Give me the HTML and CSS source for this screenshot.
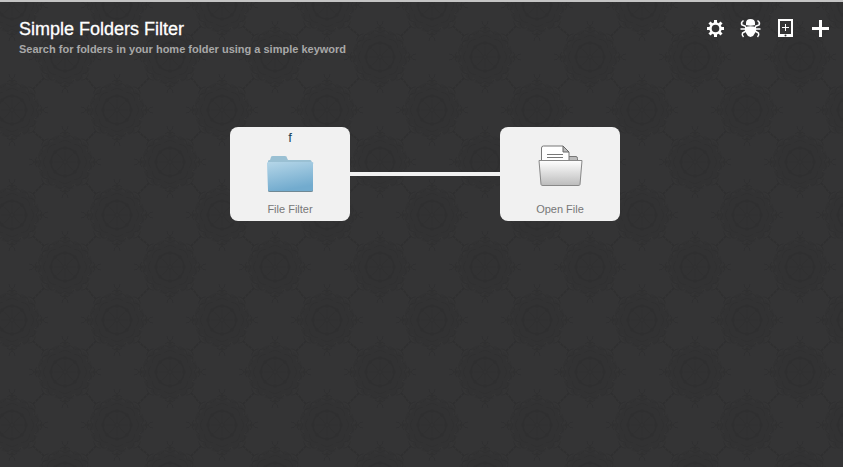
FILE: index.html
```html
<!DOCTYPE html>
<html lang="en">
<head>
<meta charset="utf-8">
<title>Simple Folders Filter</title>
<link rel="stylesheet" href="styles.css">
</head>
<body>
<svg class="wallpaper" aria-hidden="true">
  <defs>
    <g id="petal">
      <path d="M0-2v-9" stroke-width="1"/>
      <circle cy="-14" r="2" fill="#2f2f30" stroke="none"/>
      <path d="M-6-19q6-5 12 0M-9-23q3-6 9-1q6-5 9 1M-5-28q5-4 10 0" stroke-width="1"/>
    </g>
    <g id="finial">
      <path d="M0-26v-5M0-31q-3-1-3-5M0-31q3-1 3-5M-3-30l3 2l3-2" stroke-width="1"/>
    </g>
    <g id="medallion" fill="none" stroke="#2f2f30">
      <circle r="24" fill="#323233" stroke="#323233" stroke-width="8" stroke-dasharray="7 3"/>
      <circle r="14" stroke-width="2"/>
      <circle r="2" stroke-width="1"/>
      <use href="#petal"/><use href="#petal" transform="rotate(45)"/><use href="#petal" transform="rotate(90)"/><use href="#petal" transform="rotate(135)"/>
      <use href="#petal" transform="rotate(180)"/><use href="#petal" transform="rotate(225)"/><use href="#petal" transform="rotate(270)"/><use href="#petal" transform="rotate(315)"/>
      <use href="#finial"/><use href="#finial" transform="rotate(90)"/><use href="#finial" transform="rotate(180)"/><use href="#finial" transform="rotate(270)"/>
      <path d="M-21-21l-6-6M21-21l6-6M-21 21l-6 6M21 21l6 6" stroke-width="2" stroke-dasharray="3 1"/>
    </g>
    <pattern id="damask" width="105" height="105" patternUnits="userSpaceOnUse" x="-40" y="57">
      <use href="#medallion" x="52" y="53"/>
      <use href="#medallion" x="0" y="0"/><use href="#medallion" x="105" y="0"/>
      <use href="#medallion" x="0" y="105"/><use href="#medallion" x="105" y="105"/>
    </pattern>
  </defs>
  <rect width="100%" height="100%" fill="url(#damask)"/>
</svg>
<header class="header">
  <div class="heading">
    <h1 class="title">Simple Folders Filter</h1>
    <p class="subtitle">Search for folders in your home folder using a simple keyword</p>
  </div>
  <div class="toolbar">
    <button class="tool" type="button" aria-label="Settings">
      <svg width="20" height="20" viewBox="0 0 20 20"><g stroke="#fff" fill="none"><circle cx="10.500" cy="10.500" r="5" stroke-width="2.400"/><path stroke-width="3" d="M10.500 2v3M10.500 16v3M2 10.500h3M16 10.500h3M4.500 4.500l2 2M14.500 14.500l2 2M4.500 16.500l2-2M14.500 6.500l2-2"/></g></svg>
    </button>
    <button class="tool" type="button" aria-label="Debug">
      <svg width="20" height="20" viewBox="0 0 20 20"><path fill="#fff" d="M6 7V5q0-4 4.500-4t4.500 4v2q-4.500 1.500-9 0zM5 9q5.500-1.500 11 0q1 3-1 6q-1 3-4.500 4q-3.500-1-4.500-4q-2-3-1-6z"/><path stroke="#fff" stroke-width="1.500" fill="none" d="M6 8.500L2 7Q.500 4.500 3.500 2.500M15 8.500l4-1.500Q20.500 4.500 17.500 2.500M6 11H.500M15 11h5.500M6 13l-3.500 2q-1 2 1 4M15 13l3.500 2q1 2-1 4"/></svg>
    </button>
    <button class="tool" type="button" aria-label="Add to device">
      <svg width="20" height="20" viewBox="0 0 20 20"><path fill="#fff" fill-rule="evenodd" d="M3 1h15v18H3zM5 3v13h11V3z"/><path stroke="#fff" d="M7 9.500h7M10.500 6v7"/><circle cx="10.500" cy="17.500" r="1" fill="#333"/></svg>
    </button>
    <button class="tool" type="button" aria-label="Add object">
      <svg width="20" height="20" viewBox="0 0 20 20"><path stroke="#fff" stroke-width="3" d="M2 10.500h17M10.500 2v17"/></svg>
    </button>
  </div>
</header>
<main class="canvas">
  <section class="node">
    <span class="keyword">f</span>
    <svg class="icon" width="56" height="48" viewBox="0 0 56 48" aria-hidden="true">
      <defs>
        <linearGradient id="blue" x1="0" y1="0" x2=".3" y2="1"><stop offset="0" stop-color="#b5d6e8"/><stop offset="1" stop-color="#72abce"/></linearGradient>
      </defs>
      <path fill="#9ac0d3" d="M6 14V11q0-1 2-1l1-3q0-1 2-1h12q2 0 2 2l1 2h22q2 0 2 4z"/>
      <path fill="#6f8894" d="M6 40h45v1q0 1-2 1H8q-2 0-2-1z"/>
      <path fill="url(#blue)" d="M5 13q0-1 2-1h43q2 0 1 2v26q0 1-1 1H7q-1 0-1-1z"/>
    </svg>
    <span class="label">File Filter</span>
  </section>
  <div class="wire"></div>
  <section class="node">
    <span class="keyword"></span>
    <svg class="icon" width="56" height="48" viewBox="0 0 56 48" aria-hidden="true">
      <defs>
        <linearGradient id="silver" x1="0" y1="0" x2="0" y2="1"><stop offset="0" stop-color="#fff"/><stop offset="1" stop-color="#bcbcbc"/></linearGradient>
      </defs>
      <path fill="#bbb" stroke="#777" d="M35 12V6.500h9q1.500 0 1.500 2V12z"/>
      <path fill="#fff" stroke="#777" d="M9.500 12V-2q0-2 2-2H31l6 6v10z"/>
      <path fill="#bbb" stroke="#666" d="M31-4v6h6z"/>
      <path stroke="#777" d="M15 4.500h16M15 7.500h16"/>
      <path fill="url(#silver)" stroke="#888" d="M7 10.500h43l-2 24q0 1-2 1H11q-2 0-2-1z"/>
    </svg>
    <span class="label">Open File</span>
  </section>
</main>
</body>
</html>
```
FILE: styles.css
```css
* { box-sizing: border-box; }

body {
  margin: 0;
  min-height: 100vh;
  border-top: 2px solid #c4c4c4;
  background: #343435;
  font-family: "Liberation Sans", Arial, sans-serif;
}

.wallpaper {
  position: absolute;
  z-index: -1;
  inset: 0;
  width: 100%;
  height: 100%;
}

.header {
  display: flex;
  justify-content: space-between;
  align-items: flex-start;
  padding: 16px 13px 0 19px;
}

.title {
  margin: 0;
  color: #fff;
  font-size: 18px;
  font-weight: 400;
  line-height: 22px;
  -webkit-text-stroke: 0.3px #fff;
}

.subtitle {
  margin: 0;
  color: #a8a8a8;
  font-size: 11px;
  font-weight: 700;
  line-height: 18px;
}

.toolbar {
  display: flex;
  gap: 15px;
}

.tool {
  display: block;
  width: 20px;
  height: 20px;
  padding: 0;
  border: 0;
  background: none;
  cursor: pointer;
}

.tool svg,
.icon {
  display: block;
  overflow: visible;
}

.canvas {
  display: flex;
  justify-content: center;
  align-items: center;
  padding: 69px 0 0 7px;
}

.node {
  display: flex;
  flex-direction: column;
  align-items: center;
  width: 120px;
  border-radius: 8px;
  background: #f1f1f1;
}

.keyword {
  height: 23px;
  color: #174357;
  font-size: 13px;
  line-height: 22px;
}

.label {
  color: #777;
  font-size: 11px;
  line-height: 23px;
}

.wire {
  width: 150px;
  height: 4px;
  background: #f1f1f1;
}
```
